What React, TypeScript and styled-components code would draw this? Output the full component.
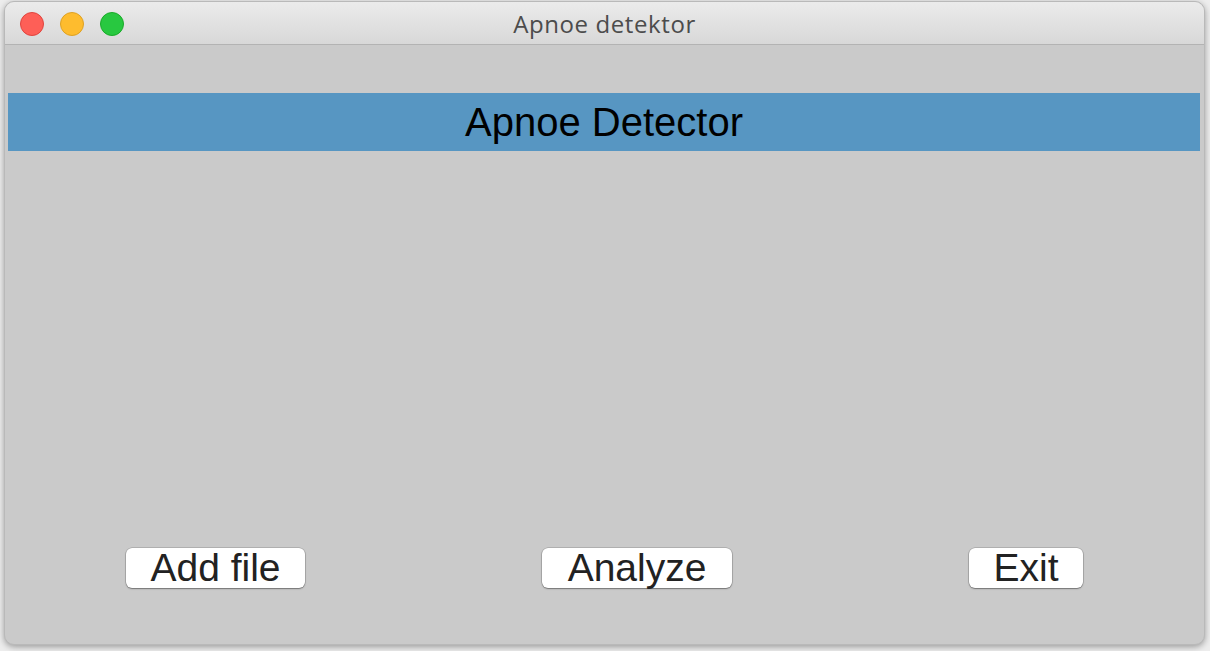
import React from "react";
import styled, { createGlobalStyle } from "styled-components";

const Global = createGlobalStyle`
  html, body { margin: 0; padding: 0; }
  body {
    background: #ededed;
    width: 1210px;
    height: 651px;
    overflow: hidden;
    font-family: "Liberation Sans", Arial, sans-serif;
  }
`;

const Page = styled.div`
  width: 1210px;
  height: 651px;
  padding: 1px 5px 6px 4px;
  box-sizing: border-box;
  display: flex;
`;

const Window = styled.div`
  flex: 1;
  display: flex;
  flex-direction: column;
  border-radius: 10px;
  overflow: hidden;
  background: #cacaca;
  border: 1px solid #b9b9b9;
  box-shadow: 0 2px 6px rgba(0, 0, 0, 0.35);
`;

const TitleBar = styled.div`
  height: 42px;
  flex: none;
  position: relative;
  display: flex;
  align-items: center;
  justify-content: center;
  background: linear-gradient(#ebebeb, #d8d8d8);
  border-bottom: 1px solid #b3b3b3;
`;

const Lights = styled.div`
  position: absolute;
  left: 15px;
  top: 10px;
  display: flex;
  gap: 16px;
`;

const Light = styled.span<{ $fill: string; $stroke: string }>`
  width: 24px;
  height: 24px;
  border-radius: 50%;
  box-sizing: border-box;
  background: ${(p) => p.$fill};
  border: 1px solid ${(p) => p.$stroke};
`;

const Title = styled.div`
  font-family: "Open Sans", "Liberation Sans", sans-serif;
  font-size: 24px;
  color: #4c4c4c;
  letter-spacing: 0.6px;
`;

const Body = styled.div`
  flex: 1;
  display: flex;
  flex-direction: column;
  padding: 48px 4px 0 3px;
`;

const Banner = styled.div`
  height: 58px;
  background: #5796c2;
  display: flex;
  align-items: center;
  justify-content: center;
  font-size: 40px;
  color: #000;
`;

const ButtonRow = styled.div`
  margin-top: 397px;
  display: flex;
  gap: 237px;
  padding-left: 118px;
`;

const Button = styled.button<{ $w: number }>`
  width: ${(p) => p.$w}px;
  height: 40px;
  background: #fff;
  border: none;
  border-radius: 6px;
  box-shadow: 0 0 0 0.5px rgba(0, 0, 0, 0.25), 0 1px 1.5px rgba(0, 0, 0, 0.35);
  font-family: "Liberation Sans", Arial, sans-serif;
  font-size: 39px;
  line-height: 40px;
  color: #222;
  padding: 0;
  display: flex;
  align-items: center;
  justify-content: center;
`;

export default function App() {
  return (
    <>
      <Global />
      <Page>
        <Window>
          <TitleBar>
            <Lights>
              <Light $fill="#fe5f57" $stroke="#e0443e" />
              <Light $fill="#febc2e" $stroke="#dea123" />
              <Light $fill="#28c840" $stroke="#1aab29" />
            </Lights>
            <Title>Apnoe detektor</Title>
          </TitleBar>
          <Body>
            <Banner>Apnoe Detector</Banner>
            <ButtonRow>
              <Button $w={179}>Add file</Button>
              <Button $w={190}>Analyze</Button>
              <Button $w={114}>Exit</Button>
            </ButtonRow>
          </Body>
        </Window>
      </Page>
    </>
  );
}
